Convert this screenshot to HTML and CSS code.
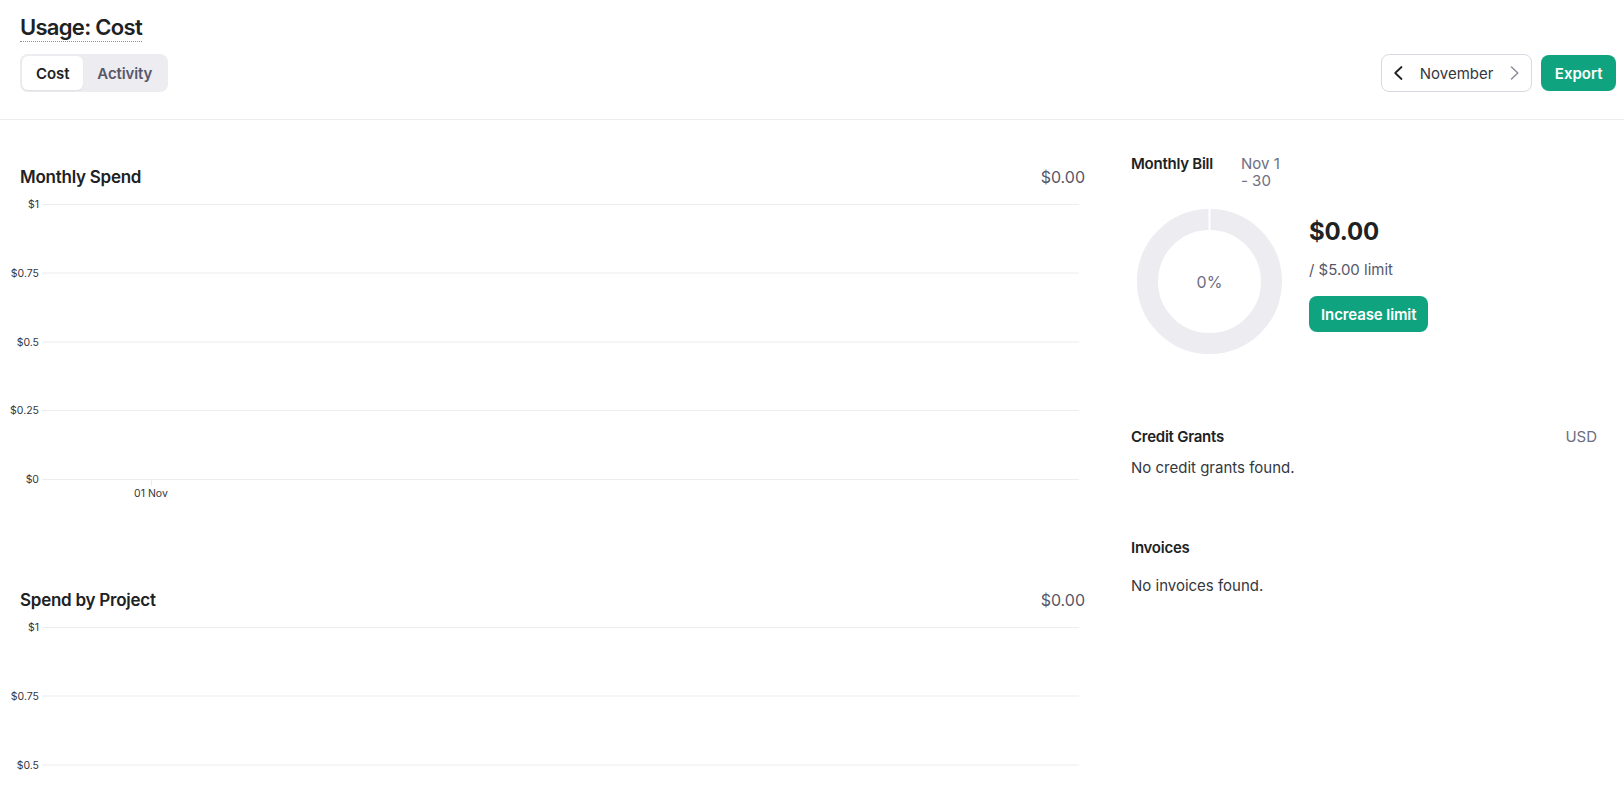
FILE: index.html
```html
<!DOCTYPE html>
<html lang="en">
<head>
<meta charset="utf-8">
<title>Usage: Cost</title>
<link rel="stylesheet" href="styles.css">
</head>
<body>
<header class="topbar">
  <div class="topbar-left">
    <h1 class="page-title"><span class="title-text">Usage: Cost</span></h1>
    <div class="tabs">
      <button class="tab active">Cost</button>
      <button class="tab">Activity</button>
    </div>
  </div>
  <div class="topbar-right">
    <div class="month-picker">
      <span class="chev"><svg width="16" height="16" viewBox="0 0 16 16"><path d="M10.5 2 L4.2 8 L10.5 14" fill="none" stroke="#202123" stroke-width="1.8" stroke-linecap="round" stroke-linejoin="round"/></svg></span>
      <span class="month">November</span>
      <span class="chev"><svg width="16" height="16" viewBox="0 0 16 16"><path d="M5.5 2 L11.8 8 L5.5 14" fill="none" stroke="#8e8ea0" stroke-width="1.6" stroke-linecap="round" stroke-linejoin="round"/></svg></span>
    </div>
    <button class="btn-primary">Export</button>
  </div>
</header>

<main class="content">
  <section class="charts">
    <div class="chart-block">
      <div class="chart-head">
        <h2 class="chart-title">Monthly Spend</h2>
        <span class="chart-total">$0.00</span>
      </div>
      <svg class="chart" width="1085" height="312" viewBox="0 0 1085 312">
        <g stroke="#ececf1" stroke-width="1">
          <line x1="42" y1="15.5" x2="1079" y2="15.5"/>
          <line x1="42" y1="84" x2="1079" y2="84"/>
          <line x1="42" y1="153" x2="1079" y2="153"/>
          <line x1="42" y1="221.5" x2="1079" y2="221.5"/>
          <line x1="42" y1="290.5" x2="1079" y2="290.5"/>
          <line x1="151.5" y1="290.5" x2="151.5" y2="297"/>
        </g>
        <g class="axis-text" text-anchor="end">
          <text x="39" y="19.2">$1</text>
          <text x="39" y="87.7">$0.75</text>
          <text x="39" y="156.7">$0.5</text>
          <text x="39" y="225.2">$0.25</text>
          <text x="39" y="294.2">$0</text>
        </g>
        <text class="axis-text" x="151" y="307.5" text-anchor="middle">01 Nov</text>
      </svg>
    </div>

    <div class="chart-block">
      <div class="chart-head">
        <h2 class="chart-title">Spend by Project</h2>
        <span class="chart-total">$0.00</span>
      </div>
      <svg class="chart" width="1085" height="170" viewBox="0 0 1085 170">
        <g stroke="#ececf1" stroke-width="1">
          <line x1="42" y1="15.5" x2="1079" y2="15.5"/>
          <line x1="42" y1="84" x2="1079" y2="84"/>
          <line x1="42" y1="153" x2="1079" y2="153"/>
        </g>
        <g class="axis-text" text-anchor="end">
          <text x="39" y="19.2">$1</text>
          <text x="39" y="87.7">$0.75</text>
          <text x="39" y="156.7">$0.5</text>
        </g>
      </svg>
    </div>
  </section>

  <aside class="side">
    <div class="bill-head">
      <span class="bill-title">Monthly Bill</span>
      <span class="bill-range">Nov 1 - 30</span>
    </div>
    <div class="bill-body">
      <div class="donut">
        <svg width="145" height="145" viewBox="0 0 145 145">
          <circle cx="72.5" cy="72.5" r="62" fill="none" stroke="#ececf1" stroke-width="21"/>
          <rect x="71.5" y="0" width="2" height="21.5" fill="#ffffff"/>
        </svg>
        <span class="donut-label">0%</span>
      </div>
      <div class="bill-info">
        <div class="bill-amount">$0.00</div>
        <div class="bill-limit">/ $5.00 limit</div>
        <button class="btn-primary btn-increase">Increase limit</button>
      </div>
    </div>

    <div class="side-section credit">
      <div class="side-head">
        <span class="side-title">Credit Grants</span>
        <span class="side-unit">USD</span>
      </div>
      <p class="empty credit-empty">No credit grants found.</p>
    </div>

    <div class="side-section invoices">
      <div class="side-head">
        <span class="side-title">Invoices</span>
      </div>
      <p class="empty invoices-empty">No invoices found.</p>
    </div>
  </aside>
</main>
</body>
</html>
```

FILE: styles.css
```css
* { box-sizing: border-box; }

html, body {
  margin: 0;
  padding: 0;
  overflow: hidden;
  background: #ffffff;
}

body {
  font-family: Inter, "Noto Sans", "Liberation Sans", sans-serif;
  color: #202123;
  font-size: 15px;
}

button {
  font-family: inherit;
  cursor: pointer;
}

/* ---------- top bar ---------- */
.topbar {
  display: flex;
  justify-content: space-between;
  align-items: flex-end;
  padding: 13px 8px 27px 20px;
  border-bottom: 1px solid #ececf1;
}

.topbar-left {
  display: flex;
  flex-direction: column;
  align-items: flex-start;
}

.page-title {
  display: flex;
  margin: 0;
  font-size: 22px;
  font-weight: 600;
  letter-spacing: -0.7px;
  line-height: 28px;
  color: #202123;
}

.title-text {
  display: block;
  border-bottom: 1px dotted #8e8ea0;
}

.tabs {
  display: flex;
  margin-top: 12px;
  padding: 2px;
  height: 38px;
  background: #ececf1;
  border-radius: 8px;
}

.tab {
  height: 34px;
  padding: 0 13.5px 0 14px;
  border: 0;
  border-radius: 6px;
  background: transparent;
  font-size: 15px;
  font-weight: 600;
  letter-spacing: -0.1px;
  color: #565869;
}

.tab.active {
  padding: 0 14px;
  background: #ffffff;
  color: #202123;
  box-shadow: 0 1px 2px rgba(0, 0, 0, 0.06);
}

.topbar-right {
  display: flex;
  align-items: center;
  gap: 9px;
}

.month-picker {
  display: flex;
  align-items: center;
  gap: 13px;
  height: 38px;
  padding: 0 9px;
  border: 1px solid #d9d9e3;
  border-radius: 8px;
  font-size: 15px;
  color: #353740;
}

.chev {
  display: flex;
  width: 16px;
  height: 16px;
}

.btn-primary {
  height: 36px;
  padding: 0 13.5px;
  border: 0;
  border-radius: 8px;
  background: #10a37f;
  color: #ffffff;
  font-size: 15px;
  font-weight: 600;
}

/* ---------- content ---------- */
.content {
  display: flex;
  gap: 46px;
  padding: 0 27px 0 0;
}

.charts {
  flex: none;
  width: 1085px;
  padding-top: 45px;
}

.chart-block + .chart-block {
  margin-top: 87px;
}

.chart-head {
  display: flex;
  justify-content: space-between;
  align-items: baseline;
  height: 24px;
  padding-left: 20px;
}

.chart-title {
  margin: 0;
  font-size: 17px;
  font-weight: 600;
  letter-spacing: -0.25px;
  line-height: 24px;
  color: #202123;
}

.chart-total {
  font-size: 16px;
  line-height: 24px;
  color: #565869;
}

.chart {
  display: block;
}

.axis-text {
  font-family: Inter, "Noto Sans", sans-serif;
  font-size: 10.5px;
  fill: #353740;
}

/* ---------- side ---------- */
.side {
  flex: 1;
  padding-top: 35px;
}

.bill-head {
  display: flex;
  align-items: flex-start;
}

.bill-title {
  width: 110px;
  font-size: 15px;
  font-weight: 600;
  letter-spacing: -0.25px;
  line-height: 17px;
  color: #202123;
}

.bill-range {
  width: 42px;
  font-size: 15px;
  line-height: 17px;
  color: #6e6e80;
}

.bill-body {
  display: flex;
  align-items: flex-start;
  margin-top: 20px;
}

.donut {
  display: grid;
  place-items: center;
  width: 145px;
  height: 145px;
  margin-left: 6px;
}

.donut > svg,
.donut > .donut-label {
  grid-area: 1 / 1;
}

.donut > svg {
  display: block;
}

.donut-label {
  font-size: 16px;
  color: #6e6e80;
}

.bill-info {
  display: flex;
  flex-direction: column;
  align-items: flex-start;
  margin-left: 27px;
  margin-top: 8px;
}

.bill-amount {
  font-size: 24px;
  font-weight: 700;
  letter-spacing: -0.2px;
  line-height: 30px;
  color: #202123;
}

.bill-limit {
  margin-top: 13px;
  font-size: 15px;
  line-height: 20px;
  color: #565869;
}

.btn-increase {
  margin-top: 16px;
  padding: 0 12px;
  letter-spacing: -0.1px;
}

.side-section.credit {
  margin-top: 74px;
}

.side-section.invoices {
  margin-top: 61px;
}

.side-head {
  display: flex;
  justify-content: space-between;
  align-items: baseline;
}

.side-title {
  font-size: 15px;
  font-weight: 600;
  letter-spacing: -0.25px;
  line-height: 17px;
  color: #202123;
}

.side-unit {
  font-size: 15px;
  line-height: 17px;
  color: #6e6e80;
}

.empty {
  margin: 0;
  font-size: 15px;
  line-height: 20px;
  color: #353740;
}

.credit-empty {
  margin-top: 13px;
}

.invoices-empty {
  margin-top: 20px;
}
```
